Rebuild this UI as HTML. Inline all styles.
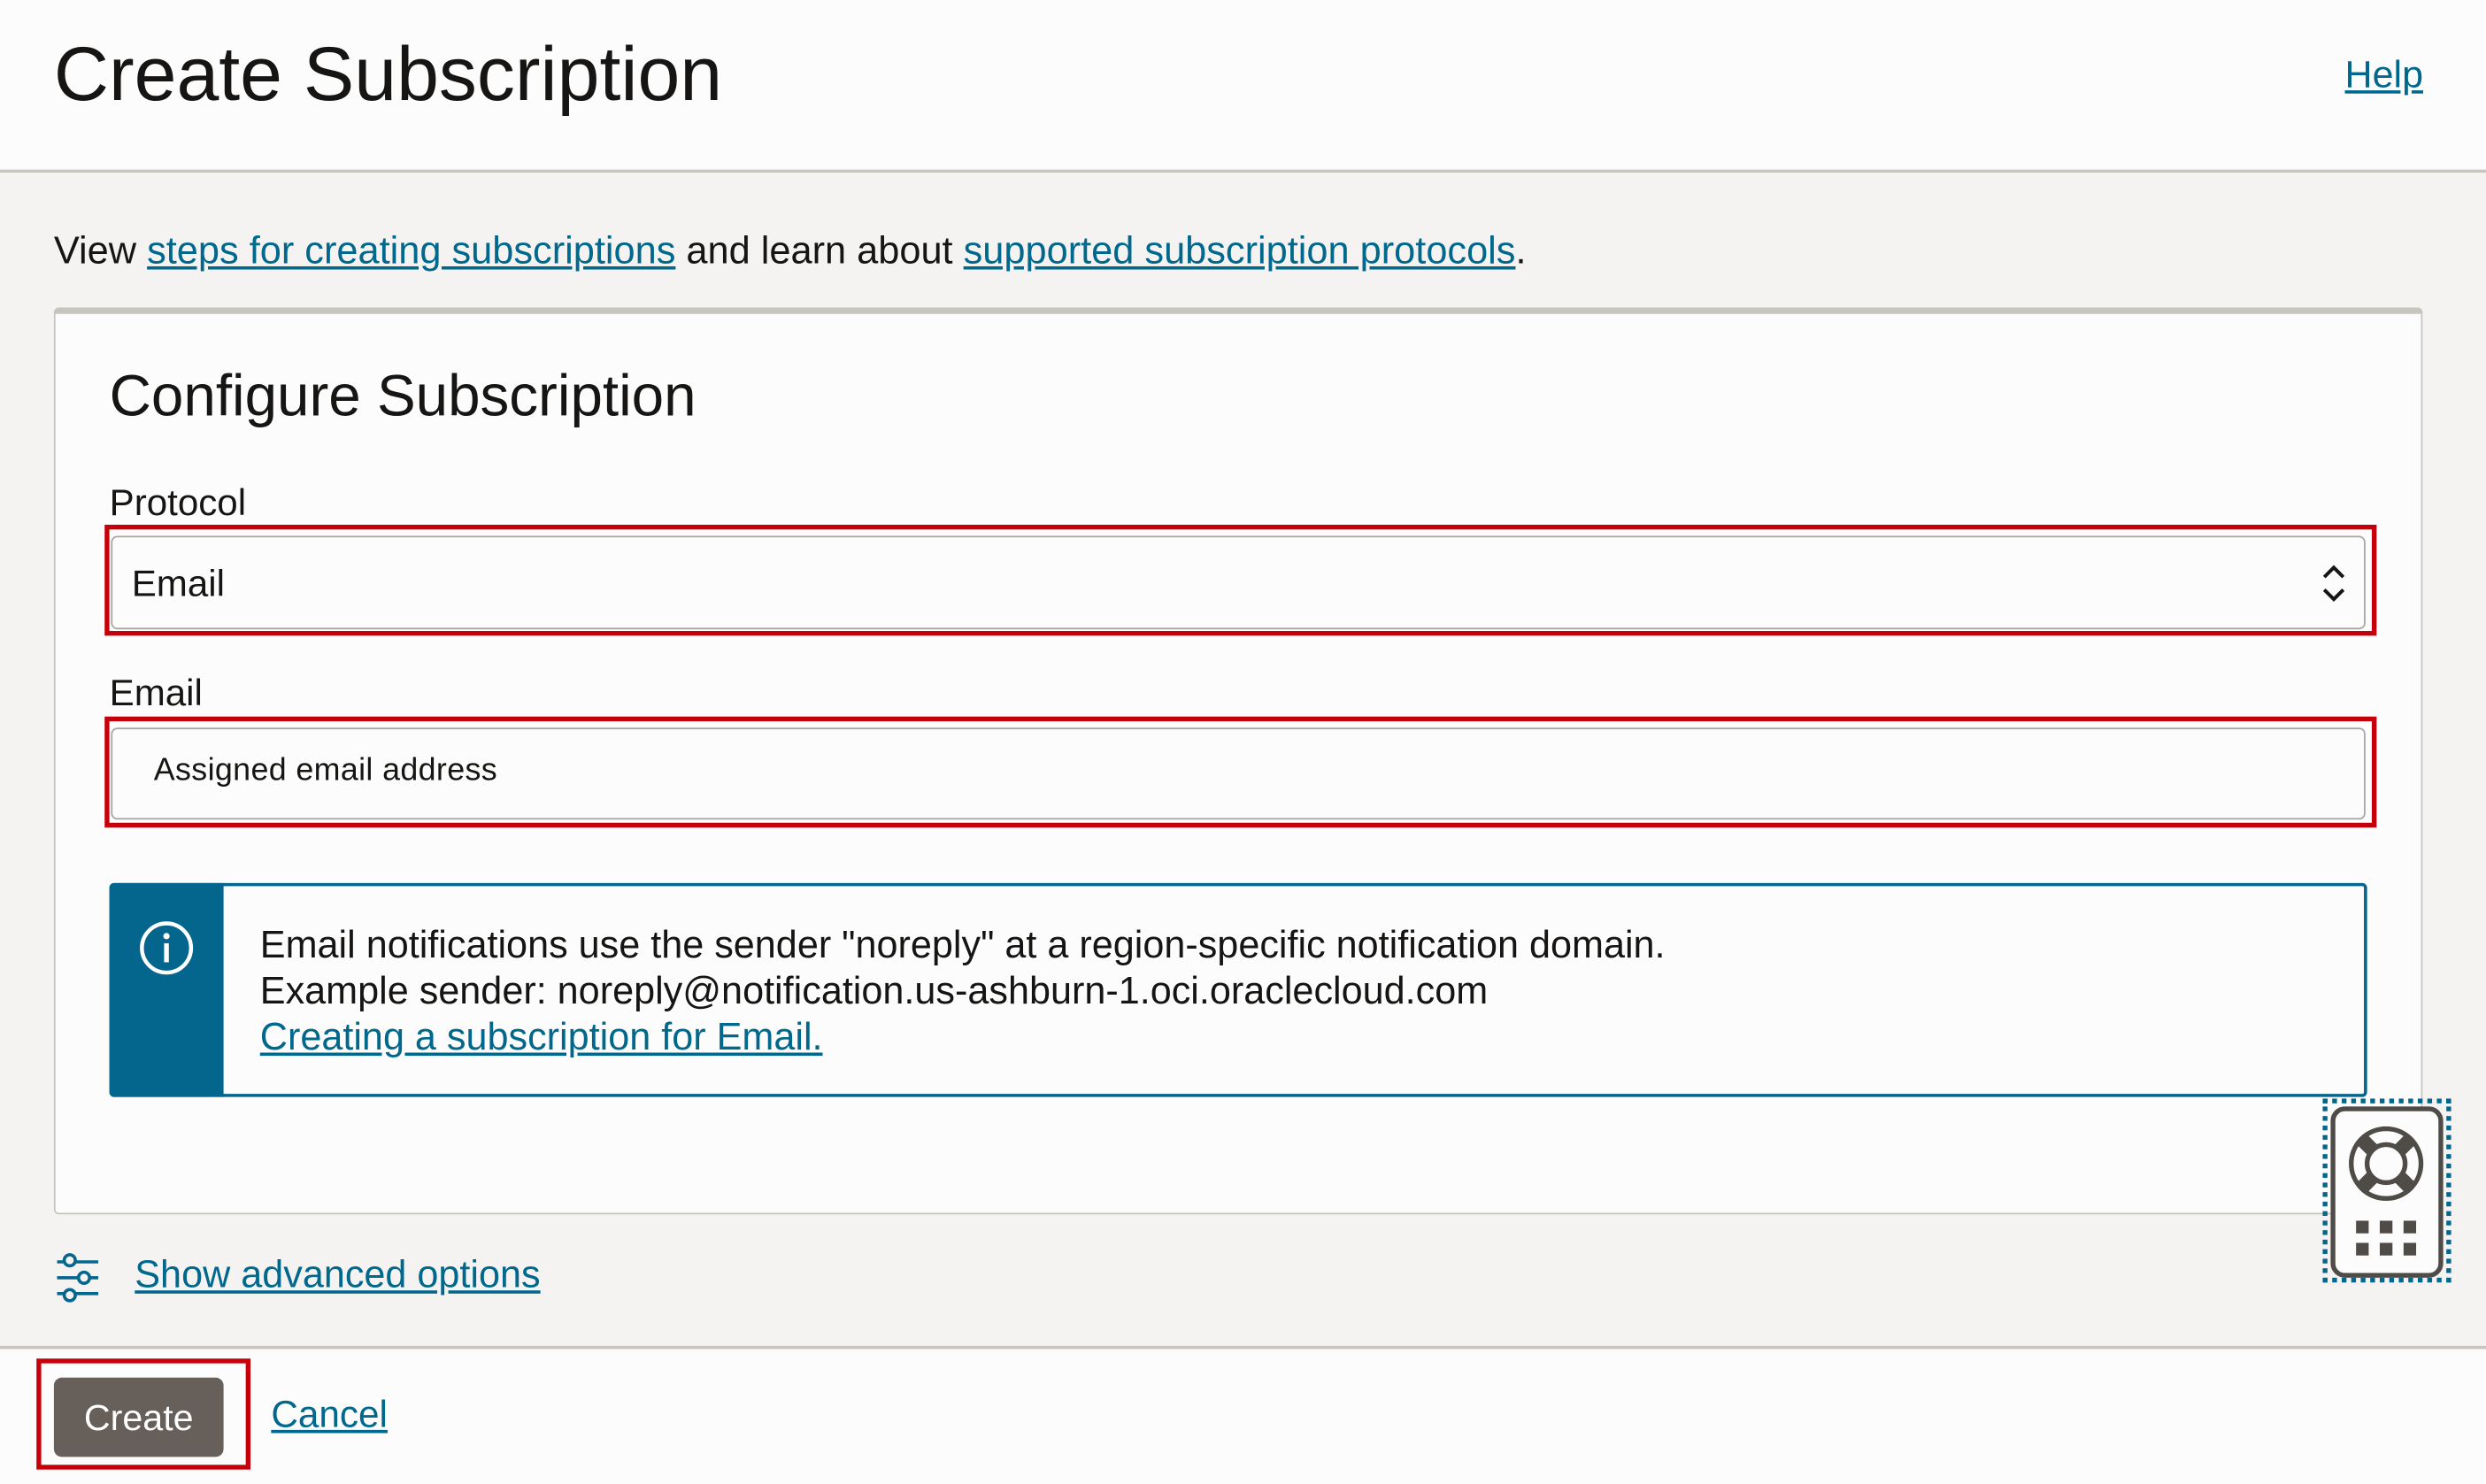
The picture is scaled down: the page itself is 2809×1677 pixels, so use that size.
<!DOCTYPE html>
<html><head><meta charset="utf-8"><style>
html,body{margin:0;padding:0;width:2809px;height:1677px;overflow:hidden;background:#fcfcfc}
#w{position:absolute;left:0;top:0;width:1568px;height:936px;transform:scale(1.79145);transform-origin:0 0;font-family:"Liberation Sans",Arial,sans-serif;color:#161513}
.a{position:absolute;white-space:nowrap}
a{color:#00688c;text-decoration:underline}
</style></head><body><div id="w">
<div class="a" style="left:0;top:0;width:1568px;height:107px;background:#fcfcfc;border-bottom:2px solid #c8c5c1"></div>
<div class="a" style="left:34px;top:20px;font-size:48px;line-height:56px">Create Subscription</div>
<a class="a" style="left:1479px;top:34px;font-size:24px">Help</a>
<div class="a" style="left:0;top:109px;width:1568px;height:740px;background:#f4f3f1;border-bottom:2px solid #c8c5c1"></div>
<div class="a" style="left:34px;top:145px;font-size:24.2px;line-height:28px">View <a>steps for creating subscriptions</a> and learn about <a>supported subscription protocols</a>.</div>
<div class="a" style="left:34px;top:194px;width:1492px;height:567px;background:#fcfcfc;border:1px solid #c8c5c1;border-top:4px solid #c8c5c1;border-radius:3px"></div>
<div class="a" style="left:69px;top:228px;font-size:36.6px;line-height:44px">Configure Subscription</div>
<div class="a" style="left:69px;top:304px;font-size:23.5px">Protocol</div>
<div class="a" style="left:66px;top:331px;width:1427px;height:64px;border:3px solid #c5000a"></div>
<div class="a" style="left:70px;top:338px;width:1420px;height:57px;border:1px solid #a9a6a2;border-radius:4px;background:#fcfcfc"></div>
<div class="a" style="left:83px;top:355px;font-size:23.5px">Email</div>
<svg class="a" style="left:1462px;top:354px" width="20" height="28" viewBox="0 0 20 28"><path d="M4 10l6-6 6 6M4 18l6 6 6-6" fill="none" stroke="#161513" stroke-width="2.2"/></svg>
<div class="a" style="left:69px;top:424px;font-size:23.5px">Email</div>
<div class="a" style="left:66px;top:452px;width:1427px;height:64px;border:3px solid #c5000a"></div>
<div class="a" style="left:70px;top:459px;width:1420px;height:56px;border:1px solid #a9a6a2;border-radius:4px;background:#fcfcfc"></div>
<div class="a" style="left:97px;top:475px;font-size:20px;letter-spacing:0.2px">Assigned email address</div>
<div class="a" style="left:69px;top:557px;width:1420px;height:131px;border:2px solid #04668c;border-radius:3px;background:#fcfcfc"></div>
<div class="a" style="left:69px;top:557px;width:72px;height:135px;background:#04668c;border-radius:3px 0 0 3px"></div>
<svg class="a" style="left:87px;top:580px" width="36" height="36" viewBox="0 0 36 36"><circle cx="18" cy="18" r="15.5" fill="none" stroke="#fff" stroke-width="2.5"/><circle cx="18" cy="10.5" r="2" fill="#fff"/><rect x="16.5" y="15" width="3" height="12" fill="#fff"/></svg>
<div class="a" style="left:164px;top:582px;font-size:24.1px;line-height:29px">Email notifications use the sender "noreply" at a region-specific notification domain.<br>Example sender: noreply@notification.us-ashburn-1.oci.oraclecloud.com<br><a>Creating a subscription for Email.</a></div>
<div class="a" style="left:1465px;top:693px;border:3px dotted #04668c;box-sizing:border-box;width:81px;height:116px"></div>
<div class="a" style="left:1470px;top:698px;width:65px;height:102px;border:3px solid #4f4c48;border-radius:9px;background:#fcfcfc"></div>
<svg class="a" style="left:1479px;top:708px" width="52" height="52" viewBox="0 0 52 52"><circle cx="26" cy="26" r="22" fill="none" stroke="#4f4c48" stroke-width="3"/><circle cx="26" cy="26" r="12" fill="none" stroke="#4f4c48" stroke-width="3"/><path d="M10 10l8 8M42 10l-8 8M10 42l8-8M42 42l-8-8" stroke="#4f4c48" stroke-width="9"/></svg>
<svg class="a" style="left:1486px;top:770px" width="38" height="22" viewBox="0 0 38 22"><g fill="#4f4c48"><rect x="0" y="0" width="8" height="8"/><rect x="15" y="0" width="8" height="8"/><rect x="30" y="0" width="8" height="8"/><rect x="0" y="14" width="8" height="8"/><rect x="15" y="14" width="8" height="8"/><rect x="30" y="14" width="8" height="8"/></g></svg>
<svg class="a" style="left:34px;top:789px" width="34" height="34" viewBox="0 0 34 34"><g fill="none" stroke="#04668c" stroke-width="2"><path d="M2 7h4M14 7h14M2 17h13M23 17h5M2 27h4M14 27h14"/><circle cx="10" cy="6" r="3.5"/><circle cx="19" cy="17" r="3.5"/><circle cx="10" cy="28" r="3.5"/></g></svg>
<a class="a" style="left:85px;top:791px;font-size:24.1px">Show advanced options</a>
<div class="a" style="left:23px;top:857px;width:129px;height:64px;border:3px solid #c5000a"></div>
<div class="a" style="left:34px;top:869px;width:107px;height:50px;background:#665f5a;border-radius:5px;color:#fff;font-size:23px;line-height:50px;text-align:center">Create</div>
<a class="a" style="left:171px;top:880px;font-size:23.6px">Cancel</a>
</div></body></html>
